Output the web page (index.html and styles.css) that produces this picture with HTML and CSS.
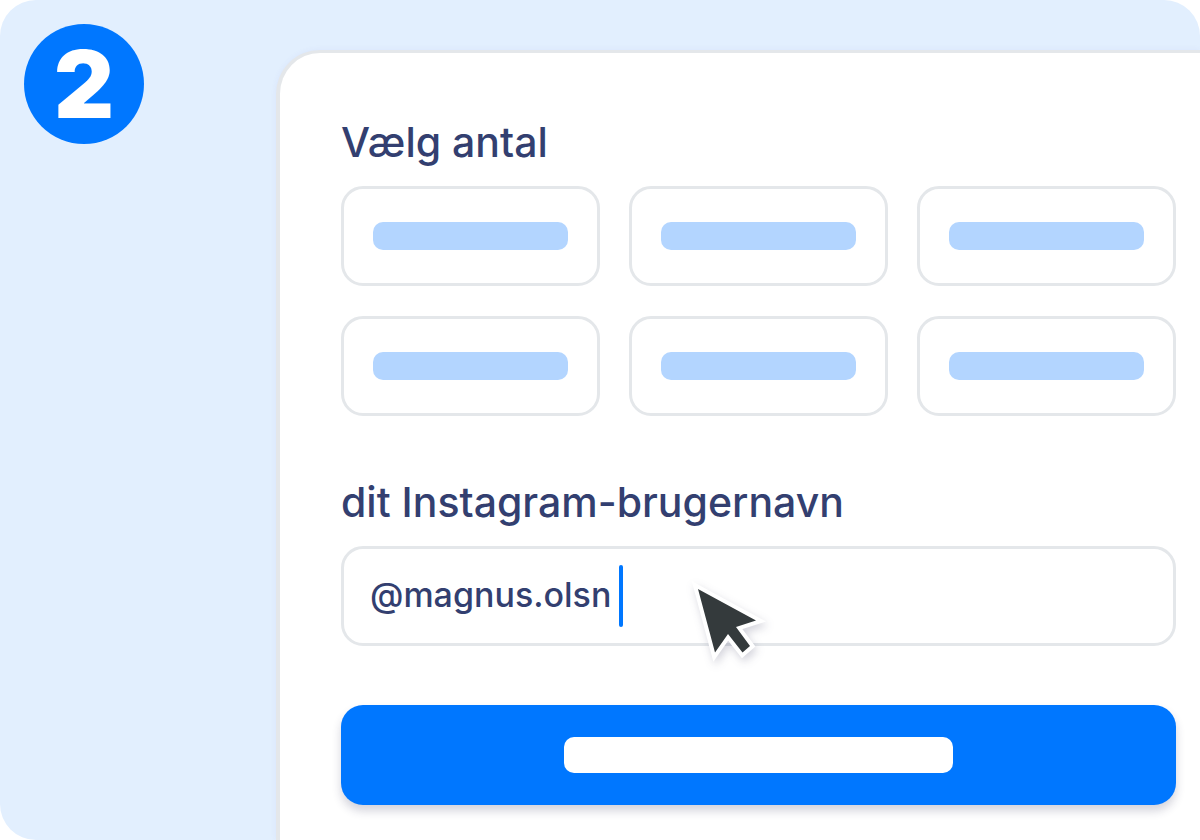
FILE: index.html
```
<!DOCTYPE html>
<html lang="da">
<head>
    <meta charset="UTF-8">
    <meta name="viewport" content="width=device-width, initial-scale=1.0">
    <title>Trin 2 - Vælg antal</title>
    <link rel="stylesheet" href="styles.css">
</head>
<body>
    <main class="step">
        <div class="step-side">
            <div class="step-number">2</div>
        </div>
        <form class="panel">
            <h2 id="amount-title">Vælg antal</h2>
            <div class="amounts" role="group" aria-labelledby="amount-title">
                <button type="button" class="amount" aria-label="Antal 1"><span></span></button>
                <button type="button" class="amount" aria-label="Antal 2"><span></span></button>
                <button type="button" class="amount" aria-label="Antal 3"><span></span></button>
                <button type="button" class="amount" aria-label="Antal 4"><span></span></button>
                <button type="button" class="amount" aria-label="Antal 5"><span></span></button>
                <button type="button" class="amount" aria-label="Antal 6"><span></span></button>
            </div>
            <label class="title" for="username">dit Instagram-brugernavn</label>
            <div class="username">
                <input type="text" id="username" value="@magnus.olsn" autocomplete="off" spellcheck="false">
                <span class="caret"></span>
                <svg class="pointer" viewBox="0 0 100 110" aria-hidden="true">
                    <path d="M18 19 L76 50.500 L56 57 L70 76 L62.500 82.500 L48 64 L35 82.500 Z"/>
                </svg>
            </div>
            <button type="submit" class="submit" aria-label="Fortsæt"><span></span></button>
        </form>
    </main>
</body>
</html>
```
FILE: styles.css
```
:root {
    --primary-color: #0077ff;
    --light-bg: #e2effe;
    --bar-color: #b3d5ff;
    --border-color: #e4e7ea;
    --text-color: #333f70;
}
* { box-sizing: border-box; margin: 0; padding: 0; }
body {
    font-family: Inter, 'Liberation Sans', sans-serif;
    background-color: #fff;
    color: var(--text-color);
}
.step {
    display: grid;
    grid-template-columns: 23% 1fr;
    min-height: 100vh;
    background-color: var(--light-bg);
    border-radius: 36px 36px 0 36px;
    overflow: hidden;
}
.step-side { padding: 24px; }
.step-number {
    display: flex;
    justify-content: center;
    align-items: center;
    width: 120px;
    height: 120px;
    border-radius: 50%;
    background-color: var(--primary-color);
    color: #fff;
    font-size: 93px;
    font-weight: 900;
    line-height: 120px;
}
.panel {
    margin-top: 50px;
    padding: 64px 24px 35px 61px;
    background-color: #fff;
    border: solid var(--border-color);
    border-width: 3px 0 0 4px;
    border-top-left-radius: 44px;
    box-shadow: 0 0 6px rgba(80, 60, 200, 0.06);
}
h2, .title {
    display: block;
    margin-bottom: 19px;
    font-size: 41px;
    font-weight: 500;
    line-height: 50px;
}
.amounts {
    display: grid;
    grid-template-columns: repeat(3, 1fr);
    gap: 30px 29px;
    margin-bottom: 61px;
}
.amount {
    height: 100px;
    padding: 0 29px;
    background-color: #fff;
    border: 3px solid var(--border-color);
    border-radius: 22px;
    cursor: pointer;
}
.amount span { display: block; height: 28px; border-radius: 10px; background-color: var(--bar-color); }
.username { position: relative; margin-bottom: 59px; }
.username input {
    display: block;
    width: 100%;
    height: 100px;
    padding: 0 26px 3px;
    background-color: #fff;
    border: 3px solid var(--border-color);
    border-radius: 22px;
    color: var(--text-color);
    font-family: inherit;
    font-size: 34px;
    font-weight: 500;
    outline: none;
}
.caret { position: absolute; left: 278px; top: 19px; width: 4px; height: 62px; border-radius: 2px; background-color: var(--primary-color); }
.pointer { position: absolute; left: 339px; top: 24px; width: 100px; height: 110px; pointer-events: none; filter: drop-shadow(2px 4px 4px rgba(40, 40, 80, 0.2)); }
.pointer path { fill: #343a3c; stroke: #fff; stroke-width: 8; paint-order: stroke; }
.submit {
    display: flex;
    justify-content: center;
    align-items: center;
    width: 100%;
    height: 100px;
    background-color: var(--primary-color);
    border: none;
    border-radius: 22px;
    box-shadow: 0 6px 10px rgba(40, 40, 80, 0.2);
    cursor: pointer;
}
.submit span { width: 389px; height: 36px; border-radius: 10px; background-color: #fff; }
```
